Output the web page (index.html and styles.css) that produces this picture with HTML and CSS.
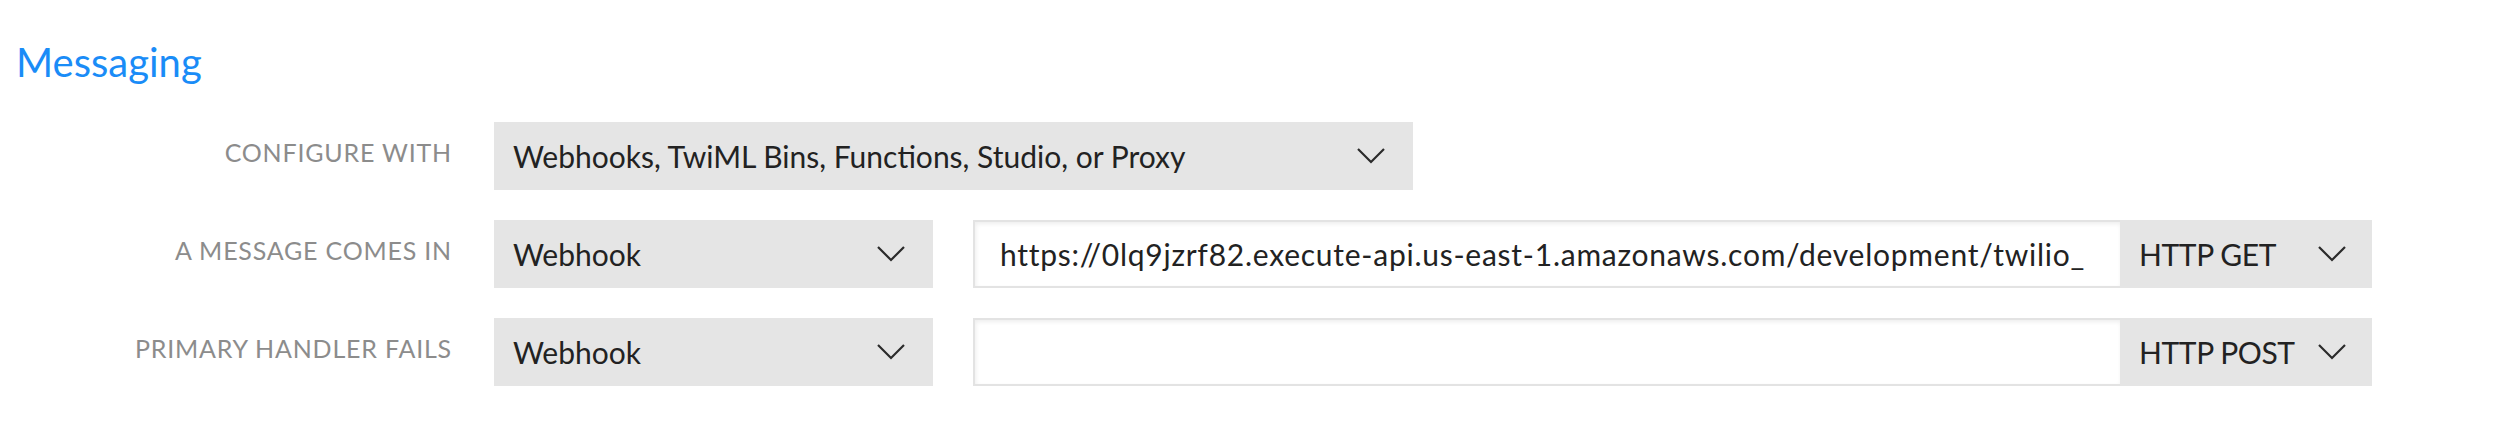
FILE: index.html
```html
<!DOCTYPE html>
<html lang="en">
<head>
<meta charset="utf-8">
<title>Messaging</title>
<link rel="stylesheet" href="styles.css">
</head>
<body>
<section class="section">
  <h2 class="title">Messaging</h2>
  <div class="form">
    <div class="row">
      <div class="label">CONFIGURE WITH</div>
      <div class="controls">
        <div class="select select-wide">
          <span class="select-text">Webhooks, TwiML Bins, Functions, Studio, or Proxy</span>
          <svg class="chev" viewBox="0 0 28 16" width="28" height="16"><path d="M1 1 L14 14 L27 1" fill="none" stroke="#2b2b2b" stroke-width="2.2"/></svg>
        </div>
      </div>
    </div>
    <div class="row">
      <div class="label">A MESSAGE COMES IN</div>
      <div class="controls">
        <div class="select select-type">
          <span class="select-text">Webhook</span>
          <svg class="chev" viewBox="0 0 28 16" width="28" height="16"><path d="M1 1 L14 14 L27 1" fill="none" stroke="#2b2b2b" stroke-width="2.2"/></svg>
        </div>
        <div class="url-group">
          <div class="url-input"><span class="url-text">https://0lq9jzrf82.execute-api.us-east-1.amazonaws.com/development/twilio_</span></div>
          <div class="select select-method">
            <span class="select-text method-text">HTTP GET</span>
            <svg class="chev" viewBox="0 0 28 16" width="28" height="16"><path d="M1 1 L14 14 L27 1" fill="none" stroke="#2b2b2b" stroke-width="2.2"/></svg>
          </div>
        </div>
      </div>
    </div>
    <div class="row">
      <div class="label">PRIMARY HANDLER FAILS</div>
      <div class="controls">
        <div class="select select-type">
          <span class="select-text">Webhook</span>
          <svg class="chev" viewBox="0 0 28 16" width="28" height="16"><path d="M1 1 L14 14 L27 1" fill="none" stroke="#2b2b2b" stroke-width="2.2"/></svg>
        </div>
        <div class="url-group">
          <div class="url-input"><span class="url-text"></span></div>
          <div class="select select-method">
            <span class="select-text method-text">HTTP POST</span>
            <svg class="chev" viewBox="0 0 28 16" width="28" height="16"><path d="M1 1 L14 14 L27 1" fill="none" stroke="#2b2b2b" stroke-width="2.2"/></svg>
          </div>
        </div>
      </div>
    </div>
  </div>
</section>
</body>
</html>
```

FILE: styles.css
```css
html, body {
  margin: 0;
  padding: 0;
  background: #ffffff;
}

body {
  font-family: Lato, "Open Sans", "Liberation Sans", sans-serif;
  color: #222222;
}

.section {
  padding: 42px 0 0 16px;
}

.title {
  margin: 0;
  font-size: 40px;
  line-height: 40px;
  font-weight: 400;
  color: #1a8cf7;
}

.form {
  margin-top: 40px;
  display: flex;
  flex-direction: column;
  gap: 30px;
}

.row {
  display: flex;
  align-items: flex-start;
  gap: 42px;
  height: 68px;
}

.label {
  width: 436px;
  text-align: right;
  padding-top: 17px;
  font-size: 25px;
  line-height: 26px;
  letter-spacing: 0.8px;
  color: #8c8c8c;
  white-space: nowrap;
}

.controls {
  display: flex;
  align-items: stretch;
  gap: 40px;
  height: 68px;
}

.select {
  box-sizing: border-box;
  height: 68px;
  display: flex;
  align-items: center;
  justify-content: space-between;
  background: #e5e5e5;
  padding: 0 28px 0 19px;
}

.select-text {
  font-size: 30px;
  line-height: 30px;
  color: #222222;
  white-space: nowrap;
}

.method-text {
  letter-spacing: -0.4px;
}

.chev {
  display: block;
  flex: none;
}

.select-wide {
  width: 919px;
}

.select-type {
  width: 439px;
}

.url-group {
  display: flex;
  height: 68px;
}

.url-input {
  box-sizing: border-box;
  width: 1147px;
  height: 68px;
  border: 2px solid #e3e3e3;
  border-right: none;
  background: #ffffff;
  box-shadow: inset 1px 2px 4px rgba(0, 0, 0, 0.07);
  padding: 0 12px 0 25px;
  display: flex;
  align-items: center;
  overflow: hidden;
}

.url-text {
  font-size: 30px;
  line-height: 30px;
  letter-spacing: 0.75px;
  color: #222222;
  white-space: nowrap;
}

.select-method {
  width: 252px;
  padding-right: 26px;
}
```
